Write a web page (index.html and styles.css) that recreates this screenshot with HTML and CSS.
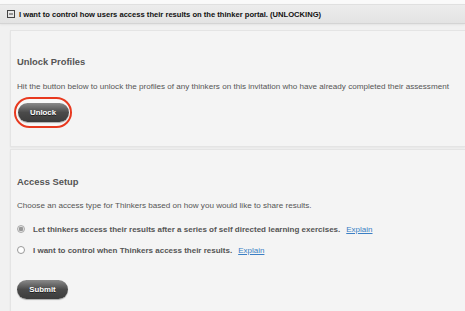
FILE: index.html
```html
<!DOCTYPE html>
<html>
<head>
<meta charset="utf-8">
<link rel="stylesheet" href="styles.css">
</head>
<body>
<div class="page">
  <div class="bar">
    <span class="toggle"><svg width="8" height="8" viewBox="0 0 8 8"><rect x="0.5" y="0.5" width="7" height="7" fill="none" stroke="#444" stroke-width="1"/><line x1="2" y1="4" x2="6" y2="4" stroke="#444" stroke-width="1"/></svg></span>
    <span class="bar-title">I want to control how users access their results on the thinker portal. (UNLOCKING)</span>
  </div>
  <div class="content">
    <section class="panel panel-unlock">
      <h2 class="heading">Unlock Profiles</h2>
      <p class="text">Hit the button below to unlock the profiles of any thinkers on this invitation who have already completed their assessment</p>
      <div class="ring"><button class="btn">Unlock</button></div>
    </section>
    <section class="panel panel-access">
      <h2 class="heading">Access Setup</h2>
      <p class="text">Choose an access type for Thinkers based on how you would like to share results.</p>
      <label class="option"><span class="radio checked"></span><span class="opt-text">Let thinkers access their results after a series of self directed learning exercises.</span><a class="explain" href="#">Explain</a></label>
      <label class="option"><span class="radio"></span><span class="opt-text">I want to control when Thinkers access their results.</span><a class="explain" href="#">Explain</a></label>
      <button class="btn btn-submit">Submit</button>
    </section>
  </div>
</div>
</body>
</html>
```
FILE: styles.css
```css
* { box-sizing: border-box; }
html, body { margin: 0; padding: 0; }
body {
  width: 465px;
  height: 311px;
  overflow: hidden;
  background: #f1f1f1;
  font-family: "Liberation Sans", Arial, Helvetica, sans-serif;
  color: #555;
}
.page {
  padding-top: 4px;
  background: linear-gradient(#fafafa, #fafafa) top/100% 4px no-repeat, #f1f1f1;
}
.bar {
  height: 20px;
  display: flex;
  align-items: center;
  padding-left: 7px;
  gap: 4px;
  background: linear-gradient(#ececec, #e3e3e3);
  border-top: 1px solid #e0e0e0;
  border-bottom: 1px solid #d4d4d4;
  box-shadow: 0 1px 2px rgba(0,0,0,0.06);
}
.toggle { display: flex; width: 8px; height: 8px; }
.bar-title {
  font-size: 7.6px;
  font-weight: bold;
  color: #111;
}
.content {
  padding: 6px 0 0 10px;
  display: flex;
  flex-direction: column;
  gap: 2px;
}
.panel {
  background: #f4f4f4;
  border: 1px solid #e4e4e4;
  border-right: none;
  box-shadow: 0 1px 2px rgba(0,0,0,0.05);
  padding: 0 0 0 6px;
}
.panel-unlock { height: 117px; padding-top: 25px; }
.panel-access { padding-top: 26px; height: 170px; }
.heading {
  margin: 0;
  font-size: 9.4px;
  font-weight: bold;
  color: #555;
  line-height: 12px;
}
.text {
  margin: 13px 0 0;
  font-size: 8.1px;
  line-height: 10px;
  color: #555;
}
.panel-unlock .text { margin-top: 14px; }
.ring {
  margin-top: 5px;
  margin-left: -3px;
  width: 58px;
  height: 31px;
  border: 2px solid #e8391f;
  border-radius: 16px;
  display: flex;
  align-items: center;
  justify-content: center;
  background: #f8f8f8;
}
.btn {
  width: 51px;
  height: 19px;
  border: none;
  border-radius: 10px;
  background: linear-gradient(#8a8a8a, #4a4a4a 50%, #3c3c3c);
  box-shadow: 0 1px 1px rgba(0,0,0,0.3);
  color: #fff;
  font-family: "Liberation Sans", Arial, sans-serif;
  font-size: 7.8px;
  font-weight: bold;
  text-shadow: 0 1px 0 rgba(0,0,0,0.6);
  padding: 0;
}
.option {
  display: flex;
  align-items: center;
  margin-top: 11px;
  height: 10px;
  padding-left: 0;
  font-size: 8px;
}
.panel-access .text + .option { margin-top: 13px; }
.radio {
  width: 8px;
  height: 8px;
  border-radius: 50%;
  border: 1px solid #999;
  background: #fff;
  margin-right: 8px;
  flex: none;
}
.radio.checked {
  border-color: #aaa;
  background: radial-gradient(circle, #999 0 2px, #e4e4e4 2.5px);
}
.opt-text { font-weight: bold; color: #555; }
.explain {
  margin-left: 6px;
  color: #3b7fc4;
  text-decoration: underline;
}
.btn-submit { margin-top: 25px; }
```
